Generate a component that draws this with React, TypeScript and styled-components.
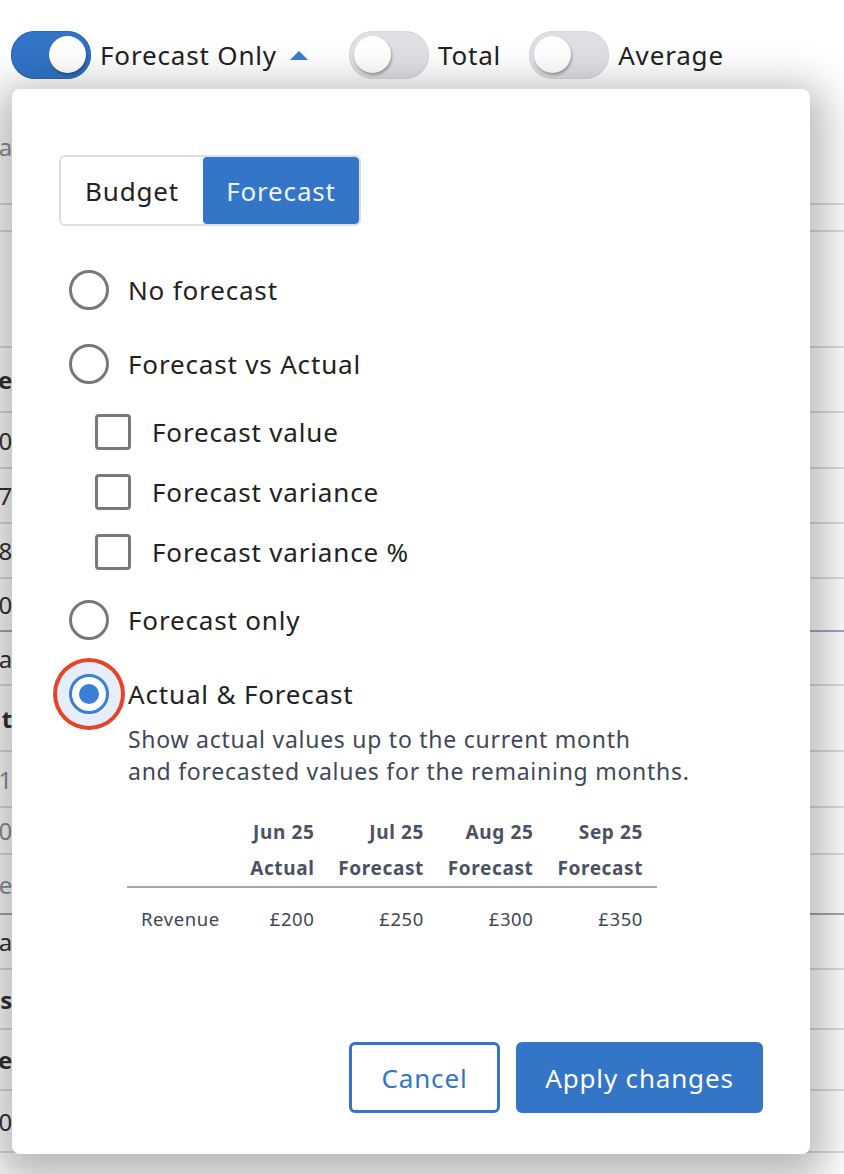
import styled, { createGlobalStyle } from 'styled-components'

const GlobalStyle = createGlobalStyle`
  html, body {
    margin: 0;
    padding: 0;
  }
  body {
    background: #fff;
    font-family: 'Noto Sans', 'Open Sans', sans-serif;
    color: #222;
  }
  * {
    letter-spacing: 0.032em;
  }
`

const Page = styled.div`
  position: relative;
  width: 844px;
  height: 1174px;
  overflow: hidden;
  background: #fff;
`

const Toolbar = styled.div`
  box-sizing: border-box;
  height: 89px;
  padding: 21px 0 0 11px;
  display: flex;
  align-items: center;
`

const ToggleItem = styled.div`
  display: flex;
  align-items: center;
  margin-right: 28px;
`

const Track = styled.span<{ $on?: boolean }>`
  box-sizing: border-box;
  width: 80px;
  height: 48px;
  border-radius: 24px;
  padding: 5px;
  display: flex;
  justify-content: ${({ $on }) => ($on ? 'flex-end' : 'flex-start')};
  background: ${({ $on }) => ($on ? '#3274c6' : '#dfe0e4')};
  box-shadow: inset 0 0 0 1px ${({ $on }) => ($on ? '#2c68b3' : '#d6d7dc')};
`

const Knob = styled.span`
  width: 37px;
  height: 37px;
  border-radius: 50%;
  background: #fff;
  box-shadow: 1px 2px 3px rgba(0, 0, 0, 0.3);
`

const ToggleLabel = styled.span`
  margin-left: 9px;
  font-size: 26px;
  color: #222;
`

const Caret = styled.span`
  margin: 0 13px 0 13px;
  width: 0;
  height: 0;
  border-left: 9px solid transparent;
  border-right: 9px solid transparent;
  border-bottom: 9px solid #3a7bd5;
`

const BackTable = styled.div`
  display: flex;
  flex-direction: column;
`

const BackRow = styled.div<{ $h: number; $strong?: boolean }>`
  box-sizing: border-box;
  height: ${({ $h }) => $h}px;
  display: flex;
  align-items: center;
  border-bottom: 2px solid ${({ $strong }) => ($strong ? '#a3a8b1' : '#d9dce1')};
`

const BackCell = styled.div<{ $tone: 'bold' | 'dark' | 'muted' }>`
  width: 13px;
  display: flex;
  justify-content: flex-end;
  overflow: hidden;
  white-space: nowrap;
  font-size: 24px;
  font-weight: ${({ $tone }) => ($tone === 'bold' ? 700 : 400)};
  color: ${({ $tone }) => ($tone === 'muted' ? '#8a8f98' : '#333')};
`

const Popup = styled.div`
  position: absolute;
  top: 89px;
  left: 12px;
  box-sizing: border-box;
  width: 798px;
  height: 1065px;
  padding: 66px 47px 41px 47px;
  background: #fff;
  border-radius: 8px;
  box-shadow: 0 12px 40px 16px rgba(0, 0, 0, 0.27);
  display: flex;
  flex-direction: column;
`

const Segmented = styled.div`
  display: flex;
  align-self: flex-start;
  height: 71px;
  border: 2px solid #dedede;
  border-radius: 6px;
  box-sizing: border-box;
  overflow: hidden;
`

const Segment = styled.button<{ $active?: boolean; $w: number }>`
  width: ${({ $w }) => $w}px;
  border: none;
  margin: 0;
  padding: 0;
  font-family: inherit;
  font-size: 26px;
  text-align: center;
  background: ${({ $active }) => ($active ? '#3375c6' : '#fff')};
  color: ${({ $active }) => ($active ? '#eef3fb' : '#222')};
  border-radius: ${({ $active }) => ($active ? '4px' : '0')};
`

const OptionList = styled.div`
  margin-top: 39px;
  padding-left: 10px;
  display: flex;
  flex-direction: column;
  gap: 24px;
`

const RadioRow = styled.div`
  height: 50px;
  display: flex;
  align-items: center;
  gap: 19px;
`

const Radio = styled.span<{ $checked?: boolean }>`
  position: relative;
  box-sizing: border-box;
  flex: none;
  width: 40px;
  height: 40px;
  border-radius: 50%;
  background: #fff;
  border: 3px solid ${({ $checked }) => ($checked ? '#3a7fd5' : '#787878')};
  box-shadow: ${({ $checked }) =>
    $checked ? '0 0 0 12px #e6eefa, 0 0 0 16px #e5432a' : 'none'};

  &::after {
    content: '';
    display: ${({ $checked }) => ($checked ? 'block' : 'none')};
    position: absolute;
    left: 7px;
    top: 7px;
    width: 20px;
    height: 20px;
    border-radius: 50%;
    background: #3a7fd5;
  }
`

const OptionLabel = styled.span`
  font-size: 26px;
  color: #222;
`

const CheckList = styled.div`
  padding-left: 26px;
  display: flex;
  flex-direction: column;
  gap: 22px;
`

const CheckRow = styled.div`
  height: 38px;
  display: flex;
  align-items: center;
  gap: 21px;
`

const Checkbox = styled.span`
  box-sizing: border-box;
  width: 36px;
  height: 36px;
  border: 3px solid #787878;
  border-radius: 4px;
`

const SelectedOption = styled.div`
  display: flex;
  flex-direction: column;
`

const Detail = styled.div`
  padding-left: 59px;
`

const Description = styled.p`
  margin: 4px 0 0 0;
  font-size: 23px;
  line-height: 32px;
  color: #3f4858;
`

const Preview = styled.table`
  margin-top: 27px;
  margin-left: -1px;
  width: 530px;
  border-collapse: collapse;
  color: #4a5263;
`

const HeadCell = styled.th<{ $last?: boolean }>`
  height: 36px;
  padding: 0 14px 0 0;
  text-align: right;
  font-size: 19px;
  font-weight: 700;
  border-bottom: ${({ $last }) => ($last ? '2px solid #a8a8a8' : 'none')};
  white-space: nowrap;
`

const LabelHead = styled.th<{ $last?: boolean }>`
  width: 90px;
  border-bottom: ${({ $last }) => ($last ? '2px solid #a8a8a8' : 'none')};
`

const BodyCell = styled.td<{ $label?: boolean }>`
  height: 60px;
  padding: ${({ $label }) => ($label ? '0 0 0 14px' : '0 14px 0 0')};
  text-align: ${({ $label }) => ($label ? 'left' : 'right')};
  font-size: 18.5px;
  color: #3f4655;
  width: ${({ $label }) => ($label ? '76px' : '96px')};
`

const Footer = styled.div`
  margin-top: auto;
  display: flex;
  justify-content: flex-end;
  gap: 16px;
`

const Button = styled.button<{ $primary?: boolean }>`
  box-sizing: border-box;
  height: 71px;
  padding: 0;
  width: ${({ $primary }) => ($primary ? '247px' : '151px')};
  border-radius: 6px;
  font-family: inherit;
  font-size: 26px;
  border: 3px solid #3375c6;
  background: ${({ $primary }) => ($primary ? '#3375c6' : '#fff')};
  color: ${({ $primary }) => ($primary ? '#fff' : '#3375c6')};
`

type BackRowData = { h: number; text: string; tone: 'bold' | 'dark' | 'muted'; strong?: boolean }

const backRows: BackRowData[] = [
  { h: 116, text: 'a', tone: 'muted' },
  { h: 27, text: '', tone: 'dark' },
  { h: 116, text: '', tone: 'dark' },
  { h: 65, text: 'Name', tone: 'bold' },
  { h: 56, text: '1,200', tone: 'dark' },
  { h: 55, text: '347', tone: 'dark' },
  { h: 55, text: '538', tone: 'dark' },
  { h: 53, text: '900', tone: 'dark', strong: true },
  { h: 54, text: 'ta', tone: 'dark' },
  { h: 66, text: 't', tone: 'bold' },
  { h: 56, text: '41', tone: 'muted' },
  { h: 47, text: '60', tone: 'muted' },
  { h: 60, text: 'e', tone: 'muted', strong: true },
  { h: 55, text: 'ta', tone: 'dark' },
  { h: 60, text: 'ss', tone: 'bold' },
  { h: 61, text: 'e', tone: 'bold' },
  { h: 62, text: '100', tone: 'dark' },
  { h: 40, text: '', tone: 'dark' },
]

const months = [
  { month: 'Jun 25', kind: 'Actual', value: '£200' },
  { month: 'Jul 25', kind: 'Forecast', value: '£250' },
  { month: 'Aug 25', kind: 'Forecast', value: '£300' },
  { month: 'Sep 25', kind: 'Forecast', value: '£350' },
]

const checks = ['Forecast value', 'Forecast variance', 'Forecast variance %']

const App = () => {
  return (
    <Page>
      <GlobalStyle />
      <Toolbar>
        <ToggleItem>
          <Track $on>
            <Knob />
          </Track>
          <ToggleLabel>Forecast Only</ToggleLabel>
          <Caret />
        </ToggleItem>
        <ToggleItem>
          <Track>
            <Knob />
          </Track>
          <ToggleLabel>Total</ToggleLabel>
        </ToggleItem>
        <ToggleItem>
          <Track>
            <Knob />
          </Track>
          <ToggleLabel>Average</ToggleLabel>
        </ToggleItem>
      </Toolbar>

      <BackTable>
        {backRows.map((row, i) => (
          <BackRow key={i} $h={row.h} $strong={row.strong}>
            <BackCell $tone={row.tone}>{row.text}</BackCell>
          </BackRow>
        ))}
      </BackTable>

      <Popup>
        <Segmented>
          <Segment $w={142}>Budget</Segment>
          <Segment $w={156} $active>
            Forecast
          </Segment>
        </Segmented>

        <OptionList>
          <RadioRow>
            <Radio />
            <OptionLabel>No forecast</OptionLabel>
          </RadioRow>
          <RadioRow>
            <Radio />
            <OptionLabel>Forecast vs Actual</OptionLabel>
          </RadioRow>
          <CheckList>
            {checks.map((label) => (
              <CheckRow key={label}>
                <Checkbox />
                <OptionLabel>{label}</OptionLabel>
              </CheckRow>
            ))}
          </CheckList>
          <RadioRow>
            <Radio />
            <OptionLabel>Forecast only</OptionLabel>
          </RadioRow>
          <SelectedOption>
            <RadioRow>
              <Radio $checked />
              <OptionLabel>Actual &amp; Forecast</OptionLabel>
            </RadioRow>
            <Detail>
              <Description>
                Show actual values up to the current month
                <br />
                and forecasted values for the remaining months.
              </Description>
              <Preview>
                <thead>
                  <tr>
                    <LabelHead />
                    {months.map((m) => (
                      <HeadCell key={m.month}>{m.month}</HeadCell>
                    ))}
                  </tr>
                  <tr>
                    <LabelHead $last />
                    {months.map((m) => (
                      <HeadCell key={m.month} $last>
                        {m.kind}
                      </HeadCell>
                    ))}
                  </tr>
                </thead>
                <tbody>
                  <tr>
                    <BodyCell $label>Revenue</BodyCell>
                    {months.map((m) => (
                      <BodyCell key={m.month}>{m.value}</BodyCell>
                    ))}
                  </tr>
                </tbody>
              </Preview>
            </Detail>
          </SelectedOption>
        </OptionList>

        <Footer>
          <Button>Cancel</Button>
          <Button $primary>Apply changes</Button>
        </Footer>
      </Popup>
    </Page>
  )
}

export default App
